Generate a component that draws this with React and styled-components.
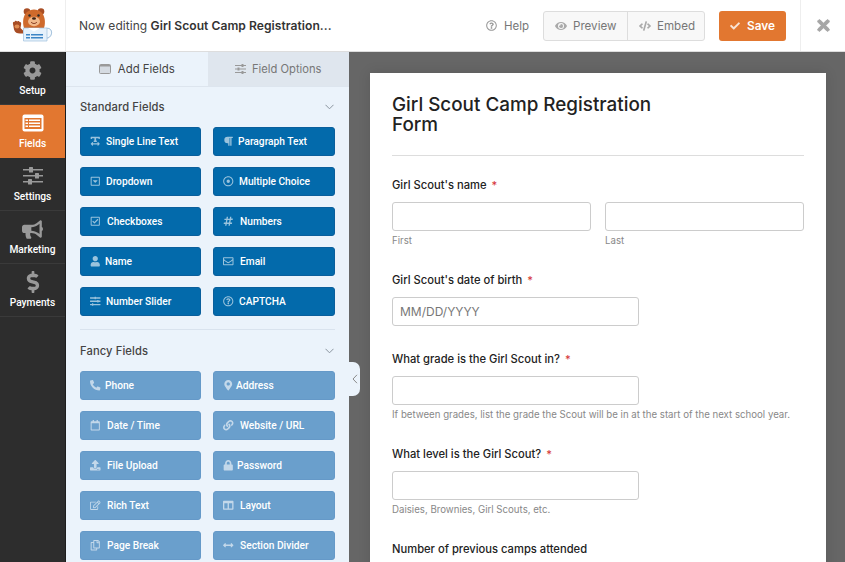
import React from 'react'
import styled, { createGlobalStyle } from 'styled-components'
import {
  FaCog, FaBullhorn, FaDollarSign, FaTimes, FaCheck, FaEye, FaCode, FaRegQuestionCircle,
  FaTextWidth, FaParagraph, FaRegCaretSquareDown, FaRegDotCircle, FaRegCheckSquare, FaHashtag,
  FaUser, FaRegEnvelope, FaSlidersH, FaPhoneAlt, FaMapMarkerAlt, FaRegCalendar, FaLink, FaUpload,
  FaLock, FaRegEdit, FaColumns, FaRegCopy, FaArrowsAltH,
} from 'react-icons/fa'

const GlobalStyle = createGlobalStyle`
  html, body { margin: 0; padding: 0; }
  body { font-family: Inter, "Liberation Sans", sans-serif; background: #666; overflow: hidden; }
  * { box-sizing: border-box; }
`

const Page = styled.div`
  width: 845px;
  height: 562px;
  display: flex;
  flex-direction: column;
  overflow: hidden;
`

const Header = styled.header`
  height: 52px;
  flex: none;
  display: flex;
  align-items: center;
  background: #fff;
  border-bottom: 1px solid #ddd;
`

const LogoCell = styled.div`
  width: 66px;
  height: 100%;
  flex: none;
  display: flex;
  align-items: center;
  justify-content: center;
  border-right: 1px solid #eee;
`

const Title = styled.div`
  margin-left: 13px;
  font-size: 12px;
  letter-spacing: .04px;
  color: #444;
  flex: 1;
  b { font-weight: 600; font-size: 12.1px; color: #333; }
`

const HelpLink = styled.div`
  display: flex;
  align-items: center;
  gap: 7px;
  font-size: 11.5px;
  color: #777;
  margin-right: 14px;
  svg { width: 11px; height: 11px; color: #999; }
`

const ButtonGroup = styled.div`
  display: flex;
  height: 30px;
  width: 162px;
  background: #f8f8f8;
  border: 1px solid #ddd;
  border-radius: 3px;
  margin-right: 14px;
`

const GroupButton = styled.div`
  display: flex;
  align-items: center;
  gap: ${p => p.$gap}px;
  padding-left: 11px;
  width: ${p => p.$width}px;
  font-size: 11.6px;
  color: #777;
  border-left: ${p => (p.$split ? '1px solid #ddd' : 'none')};
  svg { width: 12px; height: 12px; color: #aaa; flex: none; }
`

const SaveButton = styled.div`
  width: 67px;
  height: 30px;
  background: #e27730;
  border-radius: 3px;
  display: flex;
  align-items: center;
  justify-content: center;
  gap: 7px;
  color: #fff;
  font-size: 11.8px;
  font-weight: 600;
  svg { width: 10px; height: 10px; opacity: .8; }
`

const CloseCell = styled.div`
  width: 45px;
  height: 100%;
  margin-left: 14px;
  flex: none;
  display: flex;
  align-items: center;
  justify-content: center;
  border-left: 1px solid #eee;
  color: #a6a6a6;
  svg { width: 17px; height: 17px; stroke: currentColor; stroke-width: 30; }
`

const Body = styled.div`
  flex: 1;
  display: flex;
  min-height: 0;
`

const Sidebar = styled.nav`
  width: 66px;
  flex: none;
  background: #2d2d2d;
  border-right: 1px solid #1d1d1d;
`

const NavItem = styled.div`
  height: 53px;
  display: flex;
  flex-direction: column;
  align-items: center;
  padding-top: 8px;
  gap: 4px;
  background: ${p => (p.$active ? '#e27730' : 'transparent')};
  border-bottom: 1px solid ${p => (p.$active ? '#e27730' : '#3a3a3a')};
  color: ${p => (p.$active ? '#fff' : '#999')};
  span {
    font-family: Roboto, "Liberation Sans", sans-serif;
    font-size: 10.2px;
    font-weight: 500;
    line-height: 13px;
    color: #fff;
  }
`

const NavIcon = styled.div`
  height: 20px;
  display: flex;
  align-items: center;
  justify-content: center;
`

const Panel = styled.aside`
  width: 283px;
  flex: none;
  background: #ebf3fb;
  position: relative;
  z-index: 1;
`

const Tabs = styled.div`
  height: 35px;
  display: flex;
  border-bottom: 1px solid #dde5ee;
`

const Tab = styled.div`
  flex: 1;
  display: flex;
  align-items: center;
  justify-content: center;
  gap: ${p => (p.$active ? 7 : 6)}px;
  font-size: ${p => (p.$active ? 11.4 : 11.2)}px;
  color: ${p => (p.$active ? '#444' : '#777')};
  background: ${p => (p.$active ? '#ebf3fb' : '#dfe6ee')};
  svg { flex: none; }
`

const Section = styled.section`
  padding: 0 14px;
`

const SectionHead = styled.div`
  height: 40px;
  display: flex;
  align-items: center;
  justify-content: space-between;
  font-size: 11.2px;
  font-weight: 500;
  letter-spacing: .1px;
  color: #444;
  padding-right: 1px;
`

const Rule = styled.div`
  height: 1px;
  margin: 13px 14px 1px;
  background: #d9e3ee;
`

const FieldGrid = styled.div`
  display: grid;
  grid-template-columns: 121px 122px;
  column-gap: 12px;
  row-gap: 11px;
`

const FieldButton = styled.div`
  height: 29px;
  display: flex;
  align-items: center;
  padding: 0 0 0 9px;
  border-radius: 3px;
  font-family: Roboto, "Liberation Sans", sans-serif;
  font-size: 10.2px;
  font-weight: 500;
  color: #fff;
  background: ${p => (p.$fancy ? '#6a9fcc' : '#036aab')};
  border: 1px solid ${p => (p.$fancy ? '#6599c8' : '#0a5f9c')};
  svg { width: 10.5px; height: 10.5px; opacity: .6; flex: none; }
`

const IconSlot = styled.span`
  width: ${p => p.$w}px;
  flex: none;
  display: flex;
  align-items: center;
`

const HandleTab = styled.div`
  position: absolute;
  left: 283px;
  top: 310px;
  width: 11px;
  height: 34px;
  background: #ebf3fb;
  border-radius: 0 7px 7px 0;
  display: flex;
  align-items: center;
  justify-content: center;
`

const Canvas = styled.main`
  flex: 1;
  min-width: 0;
  padding: 21px 19px 0 21px;
  background: #666;
  overflow: hidden;
`

const FormCard = styled.div`
  background: #fff;
  padding: 22px 22px 0;
  height: 600px;
  box-shadow: 0 0 12px rgba(0, 0, 0, .12);
`

const FormTitle = styled.h1`
  margin: 0;
  width: 300px;
  font-size: 18.85px;
  line-height: 20px;
  font-weight: 500;
  color: #222;
  padding-bottom: 20px;
`

const TitleRule = styled.div`
  height: 1px;
  background: #ddd;
  margin-bottom: 22px;
`

const FormField = styled.div`
  margin-bottom: ${p => p.$mb}px;
`

const Label = styled.div`
  font-size: 11.2px;
  line-height: 14px;
  font-weight: 500;
  color: #222;
  margin-bottom: 10px;
  i { font-style: normal; color: #d63638; font-size: 11px; margin-left: 2px; }
`

const Input = styled.div`
  height: 29px;
  width: ${p => p.$w || '100%'};
  border: 1px solid #ccc;
  border-radius: 3px;
  background: #fff;
  padding-left: 7px;
  display: flex;
  align-items: center;
  font-size: 12px;
  color: #777;
`

const TwoCols = styled.div`
  display: grid;
  grid-template-columns: 199px 199px;
  column-gap: 14px;
`

const Sub = styled.div`
  font-size: 9.67px;
  line-height: 12px;
  margin-top: 4px;
  color: #888;
`

const Logo = () => (
  <svg width="42" height="42" viewBox="0 0 42 42">
    <path d="M34 23.500c4-1 6 2 5.500 5-.500 3-3 5-5.500 4.500z" fill="#f4f9fd" stroke="#8fb4d6" strokeWidth="1" />
    <circle cx="15" cy="6.500" r="3.300" fill="#a84d24" />
    <circle cx="29" cy="6.500" r="3.300" fill="#a84d24" />
    <path d="M12 23c-2-6-1.500-18 10-18.500 11.500.500 12 12.500 10 18.500z" fill="#cf6a2c" />
    <ellipse cx="22" cy="16.500" rx="6" ry="4.700" fill="#f2b98a" />
    <circle cx="17.500" cy="10.500" r="1.200" fill="#2b2b2b" />
    <circle cx="26.500" cy="10.500" r="1.200" fill="#2b2b2b" />
    <ellipse cx="22" cy="13.500" rx="2" ry="1.300" fill="#3b2013" />
    <path d="M19 17c1.800 2 4.200 2 6 0" stroke="#7b2f16" strokeWidth="1" fill="none" />
    <path d="M11.500 23h23.500v13h-23.500z" fill="#e6f1fb" stroke="#9fc0de" strokeWidth=".7" />
    <path d="M16 23l6 3.500 6-3.500z" fill="#fff" />
    <rect x="14" y="29" width="4" height="1.500" fill="#3d86c6" />
    <rect x="19" y="29" width="12" height="1.500" fill="#3d86c6" />
    <rect x="14" y="32" width="4" height="1.500" fill="#3d86c6" />
    <rect x="19" y="32" width="12" height="1.500" fill="#3d86c6" />
    <path d="M1 19c-.500-2 1-2.500 1.500-2 .500-1.500 2-1.500 2.500-.500 1-1 2.500-.500 2.500.500 1.500-.500 2 1 1.500 3l-.500 3 2.500 2.500v3h-3c-3 0-5-1-6-4z" fill="#a84d24" />
    <ellipse cx="5" cy="21.500" rx="2.400" ry="2" fill="#e28e52" />
  </svg>
)

const FieldsIcon = () => (
  <svg width="22" height="18" viewBox="0 0 22 18">
    <rect x=".5" y=".5" width="21" height="17" rx="2" fill="#fff" />
    <rect x="2.500" y="4" width="17" height="11" fill="#e27730" />
    <g fill="#fff">
      <rect x="3.500" y="5.500" width="2.500" height="1.500" />
      <rect x="7" y="5.500" width="11" height="1.500" />
      <rect x="3.500" y="8.500" width="2.500" height="1.500" />
      <rect x="7" y="8.500" width="11" height="1.500" />
      <rect x="3.500" y="11.500" width="2.500" height="1.500" />
      <rect x="7" y="11.500" width="11" height="1.500" />
    </g>
  </svg>
)

const SlidersIcon = () => (
  <svg width="20" height="18" viewBox="0 0 20 18" fill="#999">
    <rect x="0" y="2" width="20" height="1.500" />
    <rect x="0" y="8" width="20" height="1.500" />
    <rect x="0" y="14" width="20" height="1.500" />
    <rect x="6" y="0" width="4" height="5.500" rx=".5" />
    <rect x="12" y="6" width="4" height="5.500" rx=".5" />
    <rect x="5" y="12" width="4" height="5.500" rx=".5" />
  </svg>
)

const PanelIcon = () => (
  <svg width="12" height="10" viewBox="0 0 12 10">
    <rect x=".5" y=".5" width="11" height="9" rx="1" fill="#d5dbe2" stroke="#999" />
    <rect x="1" y="1" width="10" height="1.500" fill="#999" />
  </svg>
)

const ThinSliders = () => (
  <svg width="11" height="10" viewBox="0 0 11 10" fill="#999">
    <rect x="0" y="1" width="11" height="1" />
    <rect x="0" y="4.500" width="11" height="1" />
    <rect x="0" y="8" width="11" height="1" />
    <rect x="6.500" y="0" width="2" height="3" />
    <rect x="2.500" y="3.500" width="2" height="3" />
    <rect x="6.500" y="7" width="2" height="3" />
  </svg>
)

const Chevron = () => (
  <svg width="9" height="6" viewBox="0 0 9 6" fill="none" stroke="#8a949e" strokeWidth="1">
    <path d="M.5 .8l4 4 4-4" />
  </svg>
)

const ThinLeft = () => (
  <svg width="6" height="10" viewBox="0 0 6 10" fill="none" stroke="#8a8a8a" strokeWidth="1">
    <path d="M5 .8L1 5l4 4.200" />
  </svg>
)

const navItems = [
  { label: 'Setup', icon: <FaCog size={19} /> },
  { label: 'Fields', icon: <FieldsIcon />, active: true },
  { label: 'Settings', icon: <SlidersIcon /> },
  { label: 'Marketing', icon: <FaBullhorn size={21} /> },
  { label: 'Payments', icon: <FaDollarSign size={22} /> },
]

const standardFields = [
  { label: 'Single Line Text', icon: FaTextWidth, w: 16 },
  { label: 'Paragraph Text', icon: FaParagraph, w: 15 },
  { label: 'Dropdown', icon: FaRegCaretSquareDown, w: 16 },
  { label: 'Multiple Choice', icon: FaRegDotCircle, w: 16 },
  { label: 'Checkboxes', icon: FaRegCheckSquare, w: 17 },
  { label: 'Numbers', icon: FaHashtag, w: 17 },
  { label: 'Name', icon: FaUser, w: 15 },
  { label: 'Email', icon: FaRegEnvelope, w: 17 },
  { label: 'Number Slider', icon: FaSlidersH, w: 16 },
  { label: 'CAPTCHA', icon: FaRegQuestionCircle, w: 16 },
]

const fancyFields = [
  { label: 'Phone', icon: FaPhoneAlt, w: 15 },
  { label: 'Address', icon: FaMapMarkerAlt, w: 13 },
  { label: 'Date / Time', icon: FaRegCalendar, w: 17 },
  { label: 'Website / URL', icon: FaLink, w: 17 },
  { label: 'File Upload', icon: FaUpload, w: 17 },
  { label: 'Password', icon: FaLock, w: 14 },
  { label: 'Rich Text', icon: FaRegEdit, w: 17 },
  { label: 'Layout', icon: FaColumns, w: 17 },
  { label: 'Page Break', icon: FaRegCopy, w: 17 },
  { label: 'Section Divider', icon: FaArrowsAltH, w: 17 },
]

const Fields = ({ items, fancy }) => (
  <FieldGrid>
    {items.map(({ label, icon: Icon, w }) => (
      <FieldButton key={label} $fancy={fancy}>
        <IconSlot $w={w}><Icon /></IconSlot>
        {label}
      </FieldButton>
    ))}
  </FieldGrid>
)

const App = () => (
  <Page>
    <GlobalStyle />
    <Header>
      <LogoCell><Logo /></LogoCell>
      <Title>Now editing <b>Girl Scout Camp Registration...</b></Title>
      <HelpLink><FaRegQuestionCircle />Help</HelpLink>
      <ButtonGroup>
        <GroupButton $width={83} $gap={6}><FaEye />Preview</GroupButton>
        <GroupButton $width={77} $gap={6} $split><FaCode />Embed</GroupButton>
      </ButtonGroup>
      <SaveButton><FaCheck />Save</SaveButton>
      <CloseCell><FaTimes /></CloseCell>
    </Header>
    <Body>
      <Sidebar>
        {navItems.map(item => (
          <NavItem key={item.label} $active={item.active}>
            <NavIcon>{item.icon}</NavIcon>
            <span>{item.label}</span>
          </NavItem>
        ))}
      </Sidebar>
      <Panel>
        <Tabs>
          <Tab $active><PanelIcon />Add Fields</Tab>
          <Tab><ThinSliders />Field Options</Tab>
        </Tabs>
        <Section>
          <SectionHead>Standard Fields<Chevron /></SectionHead>
          <Fields items={standardFields} />
        </Section>
        <Rule />
        <Section>
          <SectionHead>Fancy Fields<Chevron /></SectionHead>
          <Fields items={fancyFields} fancy />
        </Section>
        <HandleTab><ThinLeft /></HandleTab>
      </Panel>
      <Canvas>
        <FormCard>
          <FormTitle>Girl Scout Camp Registration Form</FormTitle>
          <TitleRule />
          <FormField $mb={26}>
            <Label>Girl Scout's name <i>*</i></Label>
            <TwoCols>
              <div><Input /><Sub>First</Sub></div>
              <div><Input /><Sub>Last</Sub></div>
            </TwoCols>
          </FormField>
          <FormField $mb={26}>
            <Label>Girl Scout's date of birth <i>*</i></Label>
            <Input $w="247px">MM/DD/YYYY</Input>
          </FormField>
          <FormField $mb={26}>
            <Label>What grade is the Girl Scout in? <i>*</i></Label>
            <Input $w="247px" />
            <Sub>If between grades, list the grade the Scout will be in at the start of the next school year.</Sub>
          </FormField>
          <FormField $mb={26}>
            <Label>What level is the Girl Scout? <i>*</i></Label>
            <Input $w="247px" />
            <Sub>Daisies, Brownies, Girl Scouts, etc.</Sub>
          </FormField>
          <FormField $mb={0}>
            <Label>Number of previous camps attended</Label>
          </FormField>
        </FormCard>
      </Canvas>
    </Body>
  </Page>
)

export default App
